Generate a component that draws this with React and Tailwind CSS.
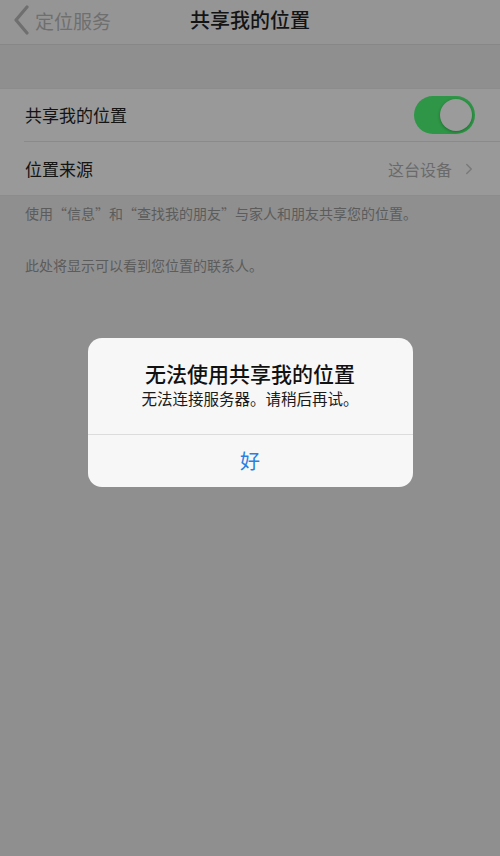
import { ChevronRight } from 'lucide-react';

const font = { fontFamily: '"Noto Sans CJK SC", "Noto Sans", sans-serif' };

function Toggle() {
  return (
    <div className="w-[61px] h-[38px] rounded-full bg-[#2e9646] p-[3px] flex justify-end">
      <div className="w-[32px] h-[32px] rounded-full bg-[#9b9b9b] shadow-[0_1px_3px_rgba(0,0,0,0.3)]" />
    </div>
  );
}

export default function App() {
  return (
    <div className="w-[500px] h-[856px] bg-[#8f8f8f] flex flex-col" style={font}>
      {/* nav bar */}
      <div className="h-[45px] bg-[#959595] border-b border-[#878787] grid grid-cols-3 items-center">
        <div className="flex items-center pl-[13px] gap-[5px] text-[#6f6f6f] -mt-[4px]">
          <svg width="17" height="30" viewBox="0 0 17 30" fill="none">
            <polyline points="14,2 3,15 14,28" stroke="currentColor" strokeWidth="3.2" strokeLinecap="round" strokeLinejoin="round" />
          </svg>
          <span className="text-[19px] leading-none">定位服务</span>
        </div>
        <div className="text-center text-[20px] font-medium text-[#141414] whitespace-nowrap leading-none -mt-[4px]">共享我的位置</div>
        <div />
      </div>

      <div className="h-[43px]" />

      {/* cell group */}
      <div className="bg-[#999999] border-y border-[#8c8c8c]">
        <div className="h-[52px] flex items-center justify-between pl-[25px] pr-[25px]">
          <span className="text-[17px] text-[#141414]">共享我的位置</span>
          <Toggle />
        </div>
        <div className="ml-[24px] border-t border-[#8a8a8a]" />
        <div className="h-[53px] flex items-center justify-between pl-[25px] pr-[22px]">
          <span className="text-[17px] text-[#141414]">位置来源</span>
          <div className="flex items-center gap-[8px] text-[#6a6a6a]">
            <span className="text-[16px]">这台设备</span>
            <ChevronRight className="w-[18px] h-[22px] text-[#7a7a7a]" strokeWidth={2} />
          </div>
        </div>
      </div>

      <div className="px-[25px] pt-[7px] text-[14px] text-[#5c5c5c] leading-[20px]">
        使用“信息”和“查找我的朋友”与家人和朋友共享您的位置。
      </div>
      <div className="px-[25px] pt-[32px] text-[14px] text-[#5c5c5c] leading-[20px]">
        此处将显示可以看到您位置的联系人。
      </div>

      {/* alert */}
      <div className="flex justify-center pt-[63px]">
        <div className="w-[325px] rounded-[14px] bg-[#f7f7f7] overflow-hidden">
          <div className="pt-[22px] pb-[25px] text-center">
            <div className="text-[21px] font-medium text-[#111] leading-[26px]">无法使用共享我的位置</div>
            <div className="text-[15.5px] text-[#1a1a1a] leading-[22px] mt-[1px]">无法连接服务器。请稍后再试。</div>
          </div>
          <div className="border-t border-[#dcdcdc] h-[53px] flex items-center justify-center text-[20px] text-[#2a7fe0]">
            好
          </div>
        </div>
      </div>
    </div>
  );
}
